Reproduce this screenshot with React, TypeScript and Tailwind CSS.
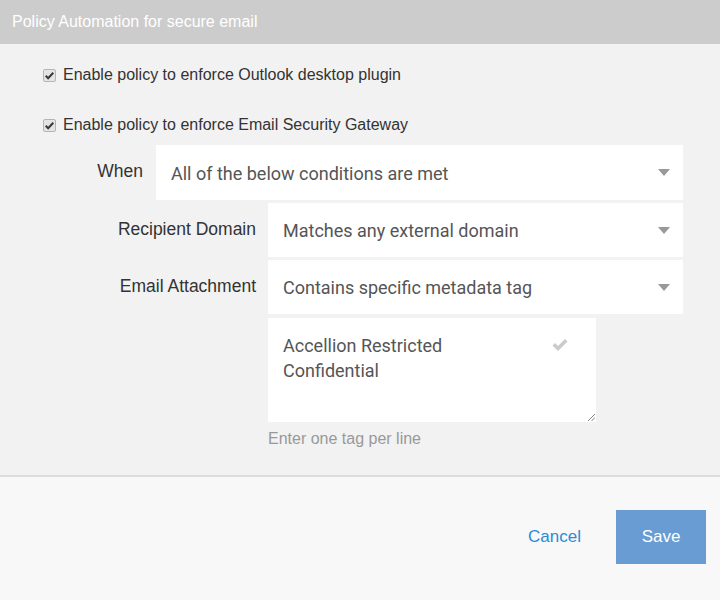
import React from "react";

const Check = ({ className, width = 2.6 }: { className?: string; width?: number }) => (
  <svg viewBox="0 0 16 16" className={className}>
    <path d="M2.5 8.5 L6 12 L13.5 4" fill="none" stroke="currentColor" strokeWidth={width} />
  </svg>
);

const CheckRow = ({ label }: { label: string }) => (
  <div className="flex items-center h-5 pl-[43px]">
    <span className="w-[13px] h-[13px] rounded-[2px] border border-[#b5b5b5] bg-[#e4e4e4] flex items-center justify-center text-[#3a3a3a]">
      <Check className="w-[11px] h-[11px]" width={3} />
    </span>
    <span className="ml-[7px] text-[16px] text-[#333]">{label}</span>
  </div>
);

const Select = ({ value, className }: { value: string; className: string }) => (
  <div className={`bg-white flex items-center justify-between pl-[15px] pr-[13px] ${className}`}>
    <span className="text-[#555] text-[18px] font-['Roboto',sans-serif] mt-[1px]">{value}</span>
    <svg viewBox="0 0 12 7" className="w-[12px] h-[7px]">
      <path d="M0 0 L12 0 L6 7 Z" fill="#999" />
    </svg>
  </div>
);

const App: React.FC = () => {
  return (
    <div className="w-[720px] h-[600px] flex flex-col font-['Liberation_Sans',Arial,sans-serif]">
      {/* Header */}
      <div className="h-[44px] bg-[#cccccc] px-3 flex items-center text-white text-[16px]">
        Policy Automation for secure email
      </div>

      {/* Body */}
      <div className="h-[431px] bg-[#f2f2f2] pt-[21px]">
        <CheckRow label="Enable policy to enforce Outlook desktop plugin" />
        <div className="mt-[30px]">
          <CheckRow label="Enable policy to enforce Email Security Gateway" />
        </div>

        <div className="mt-[10px] flex flex-col gap-[3px]">
          <div className="flex items-center">
            <div className="w-[143px] text-right text-[17.5px] text-[#333] -mt-[2px]">When</div>
            <Select value="All of the below conditions are met" className="ml-[13px] w-[527px] h-[55px]" />
          </div>
          <div className="flex items-center">
            <div className="w-[256px] text-right text-[17.5px] text-[#333] -mt-[2px]">Recipient Domain</div>
            <Select value="Matches any external domain" className="ml-[12px] w-[415px] h-[54px]" />
          </div>
          <div className="flex items-center">
            <div className="w-[256px] text-right text-[17.5px] text-[#333] -mt-[2px]">Email Attachment</div>
            <Select value="Contains specific metadata tag" className="ml-[12px] w-[415px] h-[54px]" />
          </div>
        </div>

        <div className="ml-[268px] mt-[4px] w-[328px] h-[104px] bg-white relative pt-[15px] px-[15px] text-[18px] leading-[25px] text-[#555] font-['Roboto',sans-serif]">
          <div>Accellion Restricted</div>
          <div>Confidential</div>
          {/* tag valid mark */}
          <svg viewBox="0 0 16 14" className="absolute right-[28px] top-[20px] w-[16px] h-[14px]">
            <path d="M0.5 7.5 L3 5 L6 8 L13 1 L15.5 3.5 L6 13 Z" fill="#cacaca" />
          </svg>
          <svg viewBox="0 0 8 8" className="absolute right-[1px] bottom-[1px] w-[8px] h-[8px]">
            <path d="M1 8 L8 1 M4.5 8 L8 4.5" stroke="#777" strokeWidth="0.9" />
          </svg>
        </div>
        <div className="ml-[268px] mt-[7px] text-[16px] text-[#999] leading-5">Enter one tag per line</div>
      </div>

      {/* Footer */}
      <div className="flex-1 bg-[#f8f8f8] border-t-2 border-[#dcdcdc] flex justify-end items-start pt-[33px] pr-[14px]">
        <button className="h-[54px] mr-[35px] text-[17px] text-[#2b8bd6]">Cancel</button>
        <button className="w-[90px] h-[54px] bg-[#689cd3] text-white text-[17px]">Save</button>
      </div>
    </div>
  );
};

export default App;
